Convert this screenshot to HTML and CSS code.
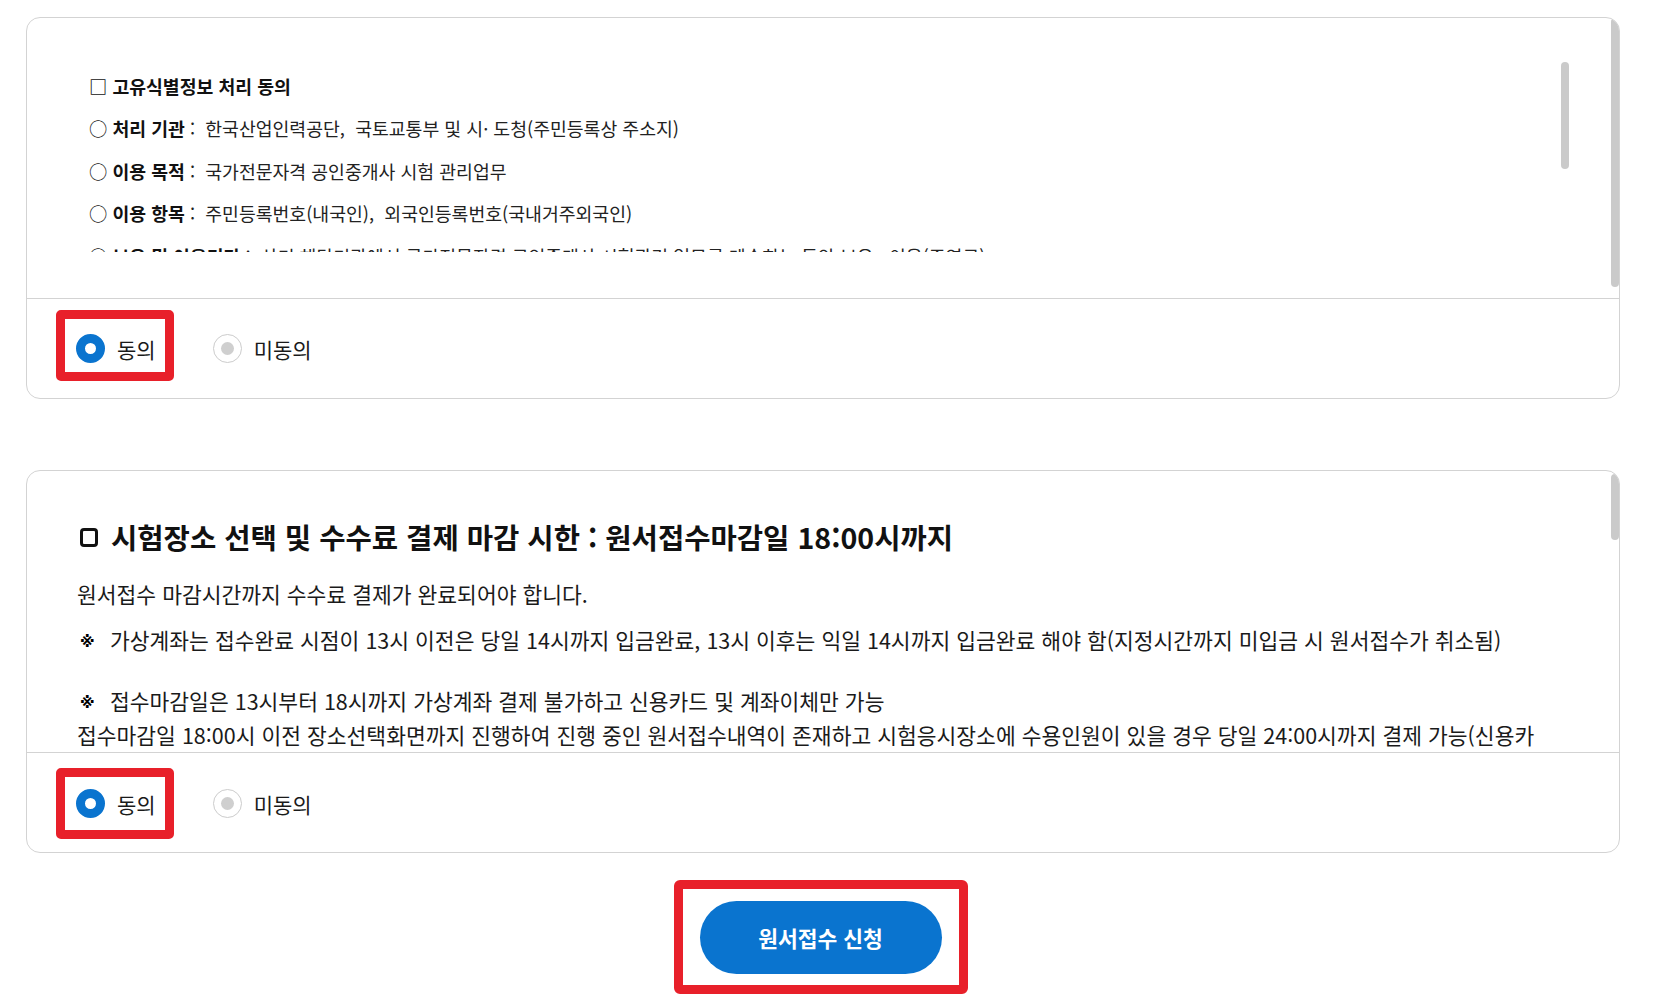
FILE: index.html
```html
<!DOCTYPE html>
<html lang="ko">
<head>
<meta charset="utf-8">
<title>원서접수 동의</title>
<link rel="stylesheet" href="styles.css">
</head>
<body>
<div class="page">
  <section class="card">
    <div class="card-body">
      <div class="terms">
        <div class="terms-line terms-head"><b>□ 고유식별정보 처리 동의</b></div>
        <div class="terms-line">○ <b>처리 기관</b> :&nbsp; 한국산업인력공단,&nbsp; 국토교통부 및 시· 도청(주민등록상 주소지)</div>
        <div class="terms-line">○ <b>이용 목적</b> :&nbsp; 국가전문자격 공인중개사 시험 관리업무</div>
        <div class="terms-line">○ <b>이용 항목</b> :&nbsp; 주민등록번호(내국인),&nbsp; 외국인등록번호(국내거주외국인)</div>
        <div class="terms-line">○ <b>보유 및 이용기간</b> :&nbsp; 상기 해당기관에서 국가전문자격 공인중개사 시험관리 업무를 계속하는 동안 보유 · 이용(준영구)</div>
        <div class="thumb thumb-inner"></div>
      </div>
      <div class="thumb thumb-outer-1"></div>
    </div>
    <div class="card-foot card-foot-1">
      <label class="option highlight highlight-1"><span class="radio radio-on"></span><span class="option-text">동의</span></label>
      <label class="option option-off-1"><span class="radio radio-off"></span><span class="option-text">미동의</span></label>
    </div>
  </section>

  <section class="card card-second">
    <div class="card-body card-body-2">
      <h2 class="title"><span class="title-box"></span>시험장소 선택 및 수수료 결제 마감 시한 : 원서접수마감일 18:00시까지</h2>
      <p class="lead">원서접수 마감시간까지 수수료 결제가 완료되어야 합니다.</p>
      <p class="note"><span class="mark">※</span>가상계좌는 접수완료 시점이 13시 이전은 당일 14시까지 입금완료, 13시 이후는 익일 14시까지 입금완료 해야 함(지정시간까지 미입금 시 원서접수가 취소됨)</p>
      <p class="note note-last"><span class="mark">※</span>접수마감일은 13시부터 18시까지 가상계좌 결제 불가하고 신용카드 및 계좌이체만 가능<br><span class="cont">접수마감일 18:00시 이전 장소선택화면까지 진행하여 진행 중인 원서접수내역이 존재하고 시험응시장소에 수용인원이 있을 경우 당일 24:00시까지 결제 가능(신용카드 및 계좌이체만 가능)</span></p>
      <div class="thumb thumb-outer-2"></div>
    </div>
    <div class="card-foot">
      <label class="option highlight"><span class="radio radio-on"></span><span class="option-text">동의</span></label>
      <label class="option"><span class="radio radio-off"></span><span class="option-text">미동의</span></label>
    </div>
  </section>

  <div class="actions">
    <div class="highlight-btn">
      <button class="submit" type="button">원서접수 신청</button>
    </div>
  </div>
</div>
</body>
</html>
```
FILE: styles.css
```css
* { box-sizing: border-box; }
html, body { margin: 0; padding: 0; background: #ffffff; }
body {
  font-family: "Noto Sans CJK KR", "Noto Sans", sans-serif;
  color: #111111;
  overflow: hidden;
  height: 1002px;
}
.page {
  padding: 17px 42px 0 26px;
}
.card {
  border: 1px solid #d3d3d3;
  border-radius: 14px;
  overflow: hidden;
  background: #ffffff;
}
.card-second {
  margin-top: 71px;
}
.card-body {
  position: relative;
  height: 280px;
  overflow: hidden;
}
.terms {
  position: relative;
  margin: 40px 50px 0 48px;
  height: 194px;
  padding: 7px 0 0 14px;
  overflow: hidden;
  font-size: 18.3px;
  line-height: 42.4px;
  color: #222222;
}
.terms-line {
  white-space: nowrap;
}
.terms-line b { font-weight: 700; color: #111111; }
.thumb {
  position: absolute;
  width: 8px;
  border-radius: 4px;
  background: #cacaca;
}
.thumb-inner {
  top: 4px;
  right: 0;
  height: 107px;
}
.thumb-outer-1 {
  top: 0;
  right: 0;
  height: 269px;
}
.thumb-outer-2 {
  top: 3px;
  right: 0;
  height: 66px;
}
.card-body-2 {
  height: 281px;
  padding: 46px 70px 0 50px;
}
.title {
  margin: 0;
  font-size: 28.6px;
  line-height: 40px;
  font-weight: 700;
  color: #111111;
  padding-left: 3px;
  display: flex;
  align-items: center;
  white-space: nowrap;
}
.title-box {
  display: inline-block;
  width: 18px;
  height: 19px;
  border: 3px solid #111111;
  border-radius: 4px;
  margin-right: 13px;
  flex: none;
}
.lead, .note {
  margin: 0;
  font-size: 21.5px;
  line-height: 34px;
  color: #1a1a1a;
}
.lead { margin-top: 20px; margin-bottom: 12px; }
.note { margin-bottom: 27px; }
.note-last { margin-bottom: 0; }
.mark {
  display: inline-block;
  font-family: "DejaVu Sans", sans-serif;
  font-size: 15px;
  line-height: 0;
  font-weight: 700;
  width: 33px;
  padding-left: 3px;
  vertical-align: 2px;
  color: #000000;
}
.card-foot {
  height: 100px;
  border-top: 1px solid #d3d3d3;
  display: flex;
  align-items: center;
  gap: 39px;
  padding: 2px 0 0 29px;
}
.card-foot-1 {
  padding: 0 0 6px 29px;
}
.option {
  display: flex;
  align-items: center;
  gap: 12px;
  font-size: 21px;
  line-height: 28px;
  color: #1a1a1a;
}
.option-off-1 {
  margin-top: 6px;
}
.highlight {
  border: 9px solid #e8202a;
  border-radius: 5px;
  padding: 12px 9px 12px 11px;
}
.highlight-1 {
  padding: 15px 9px 9px 11px;
}
.radio {
  display: block;
  width: 29px;
  height: 29px;
  border-radius: 50%;
  flex: none;
}
.radio-on {
  border: 9px solid #0a74cf;
  background: #ffffff;
}
.radio-off {
  position: relative;
  border: 1.5px solid #cccccc;
  background: #ffffff;
}
.radio-off::after {
  content: "";
  position: absolute;
  left: 50%;
  top: 50%;
  width: 13px;
  height: 13px;
  margin: -6.5px 0 0 -6.5px;
  border-radius: 50%;
  background: #cfcfcf;
}
.actions {
  display: flex;
  justify-content: center;
  padding: 27px 5px 0 0;
}
.highlight-btn {
  border: 9px solid #e8202a;
  border-radius: 6px;
  padding: 12px 17px 11px;
}
.submit {
  display: block;
  width: 242px;
  height: 73px;
  border: none;
  border-radius: 37px;
  background: #0a74cf;
  color: #ffffff;
  font-family: "Noto Sans CJK KR", "Noto Sans", sans-serif;
  font-size: 21.5px;
  font-weight: 700;
  cursor: pointer;
}
```
